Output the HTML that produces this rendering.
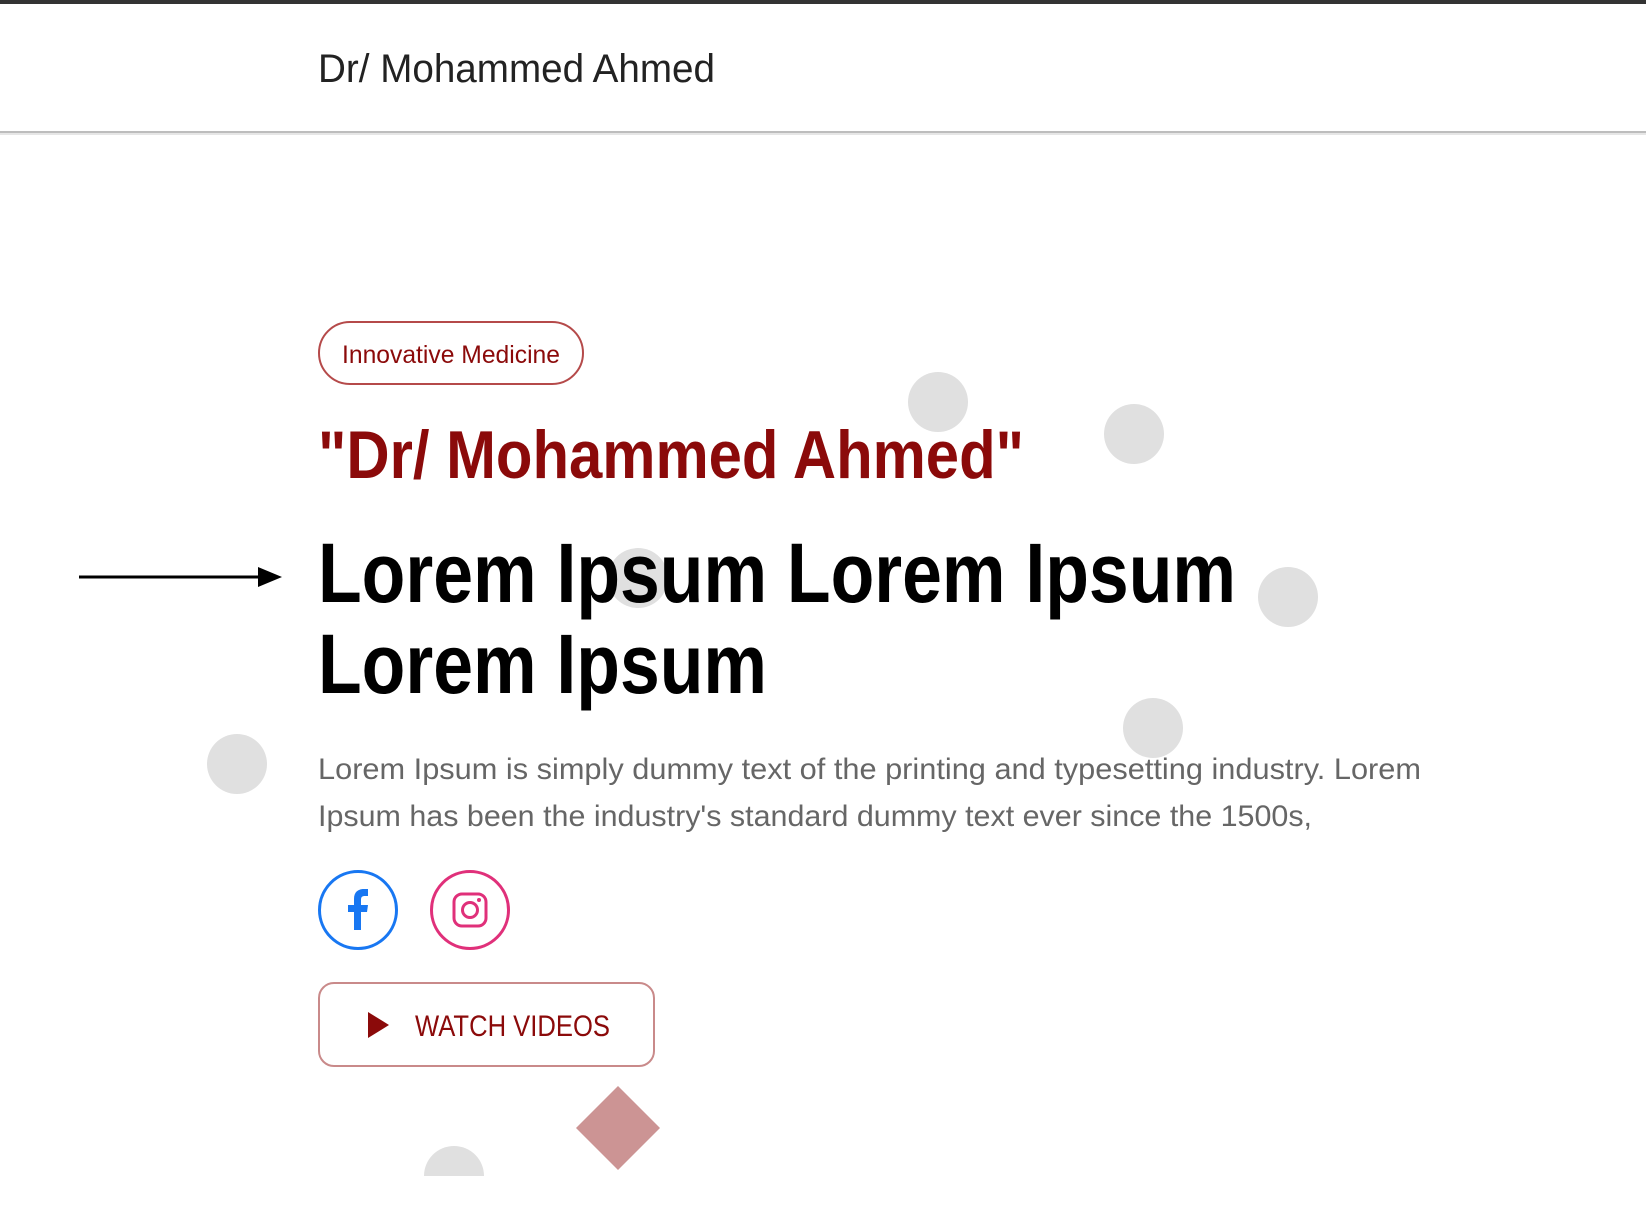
<!DOCTYPE html>
<html><head><meta charset="utf-8"><style>html,body{margin:0;padding:0;background:#fff;width:1646px;height:1214px;overflow:hidden}svg{display:block}text{font-family:"Liberation Sans",sans-serif}</style></head><body>
<svg width="1646" height="1214" viewBox="0 0 1646 1214" xmlns="http://www.w3.org/2000/svg">
<rect x="0" y="0" width="1646" height="4" fill="#333"/>
<rect x="0" y="131" width="1646" height="2" fill="#bdbdbd"/>
<rect x="0" y="133" width="1646" height="2" fill="#e6e6e6"/>
<text x="318" y="82" font-size="40" fill="#222" textLength="397" lengthAdjust="spacingAndGlyphs">Dr/ Mohammed Ahmed</text>
<g fill="#e0e0e0">
<circle cx="938" cy="402" r="30"/><circle cx="1134" cy="434" r="30"/><circle cx="638" cy="578" r="30"/>
<circle cx="1288" cy="597" r="30"/><circle cx="1153" cy="728" r="30"/><circle cx="237" cy="764" r="30"/>
<path d="M424 1176 A30 30 0 0 1 484 1176 Z"/>
</g>
<rect x="319" y="322" width="264" height="62" rx="31" fill="none" stroke="#b54a4a" stroke-width="2"/>
<text x="342" y="363" font-size="25" fill="#8b0a0a" textLength="218" lengthAdjust="spacingAndGlyphs">Innovative Medicine</text>
<text x="318" y="478" font-size="68" font-weight="bold" fill="#8b0a0a" textLength="706" lengthAdjust="spacingAndGlyphs">"Dr/ Mohammed Ahmed"</text>
<line x1="79" y1="577" x2="266" y2="577" stroke="#000" stroke-width="3"/>
<path d="M258 567 L282 577 L258 587 Z" fill="#000"/>
<text x="318" y="602" font-size="84" font-weight="bold" fill="#000" textLength="918" lengthAdjust="spacingAndGlyphs">Lorem Ipsum Lorem Ipsum</text>
<text x="318" y="693" font-size="84" font-weight="bold" fill="#000" textLength="449" lengthAdjust="spacingAndGlyphs">Lorem Ipsum</text>
<text x="318" y="779" font-size="30" fill="#666" textLength="1103" lengthAdjust="spacingAndGlyphs">Lorem Ipsum is simply dummy text of the printing and typesetting industry. Lorem</text>
<text x="318" y="826" font-size="30" fill="#666" textLength="994" lengthAdjust="spacingAndGlyphs">Ipsum has been the industry's standard dummy text ever since the 1500s,</text>
<circle cx="358" cy="910" r="38.5" fill="none" stroke="#1877f2" stroke-width="3"/>
<path d="M354 930 V912 H348 V905 H354 V899 C354 892 358 889 364 889 H368 V896 H365 C362 896 361 897 361 900 V905 H368 L367 912 H361 V930 Z" fill="#1877f2"/>
<circle cx="470" cy="910" r="38.5" fill="none" stroke="#e0307a" stroke-width="3"/>
<rect x="454" y="894" width="32" height="32" rx="8" fill="none" stroke="#e0307a" stroke-width="3"/>
<circle cx="470" cy="910" r="7.5" fill="none" stroke="#e0307a" stroke-width="3"/>
<circle cx="479" cy="900" r="2" fill="#e0307a"/>
<rect x="319" y="983" width="335" height="83" rx="15" fill="none" stroke="#c98a8a" stroke-width="2"/>
<path d="M368 1012 L389 1025 L368 1038 Z" fill="#8b0a0a"/>
<text x="415" y="1036" font-size="30" fill="#8b0a0a" textLength="195" lengthAdjust="spacingAndGlyphs">WATCH VIDEOS</text>
<path d="M618 1086 L660 1128 L618 1170 L576 1128 Z" fill="#cc9494"/>
</svg>
</body></html>
